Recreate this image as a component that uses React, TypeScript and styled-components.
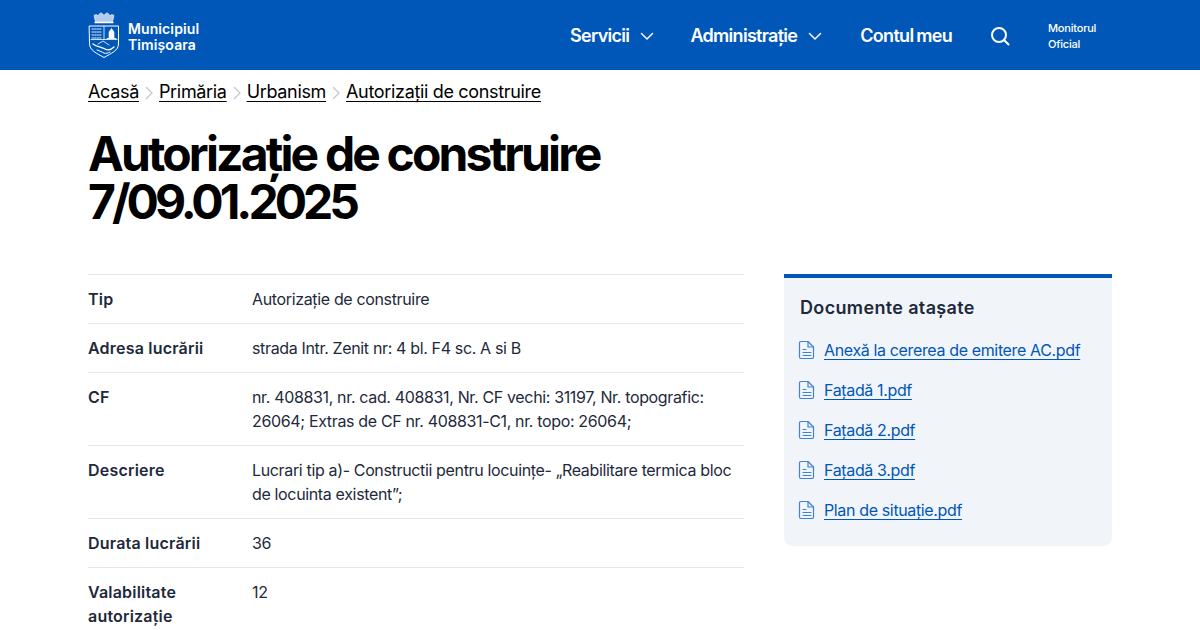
import React from "react";
import styled, { createGlobalStyle } from "styled-components";

const Global = createGlobalStyle`
  html, body { margin: 0; padding: 0; background: #fff; height: 630px; overflow: hidden; }
  body { font-family: Inter, "Liberation Sans", sans-serif; color: #1e293b; }
  * { box-sizing: border-box; }
`;

const Header = styled.header`
  height: 70px;
  background: #0057b8;
  color: #fff;
  display: flex;
  align-items: center;
  padding: 0 88px;
`;
const Brand = styled.a`
  display: flex;
  align-items: center;
  gap: 8px;
  color: #fff;
  font-size: 14px;
  line-height: 16px;
  font-weight: 600;
  letter-spacing: 0.1px;
`;
const BrandText = styled.span`
  margin-top: 3px;
`;
const Nav = styled.nav`
  margin-left: auto;
  display: flex;
  align-items: center;
  padding-top: 1px;
`;
const NavItem = styled.a<{ $gap: number }>`
  display: flex;
  align-items: center;
  gap: 11px;
  margin-right: ${(p) => p.$gap}px;
  font-size: 18px;
  line-height: 24px;
  font-weight: 600;
  letter-spacing: -0.7px;
  word-spacing: -1px;
  color: #fff;
`;
const SearchBtn = styled.span`
  display: flex;
  margin-right: 38px;
`;
const Monitor = styled.a`
  width: 64px;
  font-size: 11px;
  line-height: 16px;
  font-weight: 500;
  letter-spacing: -0.2px;
  color: #fff;
`;
const Main = styled.main`
  padding: 0 88px;
`;
const Crumbs = styled.div`
  display: flex;
  align-items: center;
  gap: 2px;
  height: 44px;
  font-size: 18px;
  line-height: 24px;
  letter-spacing: -0.33px;
  color: #000;
`;
const Crumb = styled.a`
  color: #000;
  text-decoration: underline;
  text-underline-offset: 3px;
  text-decoration-thickness: 1px;
  text-decoration-skip-ink: none;
`;
const Title = styled.h1`
  margin: 16px 0 48px;
  width: 656px;
  font-size: 48px;
  line-height: 48px;
  font-weight: 700;
  letter-spacing: -2.85px;
  color: #000;
`;
const TitleNumber = styled.span`
  letter-spacing: -4px;
`;
const Columns = styled.div`
  display: grid;
  grid-template-columns: 656px 328px;
  gap: 40px;
  align-items: start;
`;
const Row = styled.div`
  display: grid;
  grid-template-columns: 164px 1fr;
  border-top: 1px solid #e2e8f0;
  padding: 12px 0;
  font-size: 16px;
  line-height: 24px;
`;
const Label = styled.div`
  font-weight: 600;
  letter-spacing: 0.2px;
  color: #1e293b;
`;
const Value = styled.div`
  font-weight: 400;
  letter-spacing: -0.35px;
  color: #1e293b;
`;
const Side = styled.aside`
  background: #f1f5f9;
  border-top: 4px solid #0057b8;
  border-radius: 0 0 8px 8px;
  padding: 16px;
  height: 272px;
`;
const SideTitle = styled.h2`
  margin: 0 0 16px;
  font-size: 18px;
  line-height: 28px;
  font-weight: 600;
  letter-spacing: 0.35px;
  color: #1e293b;
`;
const DocList = styled.div`
  display: flex;
  flex-direction: column;
  gap: 16px;
`;
const Doc = styled.div`
  display: flex;
  align-items: center;
  gap: 8px;
  margin-left: -2px;
  font-size: 16px;
  line-height: 24px;
  letter-spacing: -0.36px;
`;
const DocLink = styled.a`
  color: #0057b8;
  text-decoration: underline;
  text-underline-offset: 3px;
  text-decoration-thickness: 1px;
  text-decoration-skip-ink: none;
`;

const Chevron = () => (
  <svg width="14" height="14" viewBox="0 0 14 14" fill="none" stroke="#fff" strokeWidth="1.5" strokeLinecap="round" strokeLinejoin="round">
    <path d="M1.500 4.500 7 10l5.500-5.500" />
  </svg>
);
const Sep = () => (
  <svg width="16" height="16" viewBox="0 0 16 16" fill="none" stroke="#c4c8ce" strokeWidth="1.4" strokeLinecap="round" strokeLinejoin="round" style={{ marginTop: 2 }}>
    <path d="M5.500 2.500 11 8l-5.500 5.500" />
  </svg>
);
const FileIcon = () => (
  <svg width="18" height="20" viewBox="0 0 18 20" fill="none" stroke="#3f83d1" strokeWidth="1.2" strokeLinecap="round" strokeLinejoin="round">
    <path d="M3 1.500h7l5.500 5.500v10a1.500 1.500 0 0 1-1.500 1.500H3A1.500 1.500 0 0 1 1.500 17V3A1.500 1.500 0 0 1 3 1.500Z" />
    <path d="M10 1.500V7h5.500M5 9.500h3M5 12.500h8M5 15.500h8" />
  </svg>
);
const Logo = () => (
  <svg width="32" height="48" viewBox="0 0 32 48" fill="none" stroke="#fff" strokeLinecap="round" strokeLinejoin="round">
    <path d="M7.500 11 6 4.500c2-1.500 3-1 4 .5 1-2 2-3 3-3s2 1 3 2.500C17 3 18 2 19 2s2 1 3 3c1-1.500 2-2 4-.5L24.500 11Z" fill="#dfe9f6" fillOpacity=".8" strokeWidth=".6" />
    <path d="M7 11.500h18" strokeWidth="1.300" />
    <path d="M1.500 15h29v18c0 6.500-7.500 9.500-14.500 13.500C9 42.500 1.500 39.500 1.500 33Z" strokeWidth="1" />
    <path d="M3 28.500h26" strokeWidth=".8" />
    <path d="M16 15v13.500" strokeWidth=".8" />
    <path d="M4 18h10M4 21h10M4 24h10M4 27h10" strokeWidth=".9" strokeDasharray="1.500 1" />
    <path d="M21 27v-6l2.500-3.500L26 21v6Z" fill="#fff" strokeWidth=".6" />
    <path d="M19 27.500h9" strokeWidth=".9" />
    <path d="M5 33c4 3 8 3 12 5s7 0 9-2" strokeWidth="1.300" />
    <path d="M9 39c3 1 5 2 7 3s4 0 6-1" strokeWidth="1" />
    <path d="M10 33l5-3 6 4" strokeWidth=".8" />
  </svg>
);

const rows: [string, React.ReactNode][] = [
  ["Tip", "Autorizație de construire"],
  ["Adresa lucrării", "strada Intr. Zenit nr: 4 bl. F4 sc. A si B"],
  ["CF", "nr. 408831, nr. cad. 408831, Nr. CF vechi: 31197, Nr. topografic: 26064; Extras de CF nr. 408831-C1, nr. topo: 26064;"],
  ["Descriere", "Lucrari tip a)- Constructii pentru locuințe- „Reabilitare termica bloc de locuinta existent”;"],
  ["Durata lucrării", "36"],
  ["Valabilitate autorizație", "12"],
];
const docs = ["Anexă la cererea de emitere AC.pdf", "Fațadă 1.pdf", "Fațadă 2.pdf", "Fațadă 3.pdf", "Plan de situație.pdf"];
const crumbs = ["Acasă", "Primăria", "Urbanism", "Autorizații de construire"];

export default function App() {
  return (
    <>
      <Global />
      <Header>
        <Brand>
          <Logo />
          <BrandText>Municipiul<br />Timișoara</BrandText>
        </Brand>
        <Nav>
          <NavItem $gap={36}>Servicii <Chevron /></NavItem>
          <NavItem $gap={38}>Administrație <Chevron /></NavItem>
          <NavItem $gap={38}>Contul meu</NavItem>
          <SearchBtn>
            <svg width="20" height="20" viewBox="0 0 20 20" fill="none" stroke="#fff" strokeWidth="2" strokeLinecap="round">
              <circle cx="9" cy="9" r="7" />
              <path d="m14 14 4.500 4.500" />
            </svg>
          </SearchBtn>
          <Monitor>Monitorul<br />Oficial</Monitor>
        </Nav>
      </Header>
      <Main>
        <Crumbs>
          {crumbs.map((c, i) => (
            <React.Fragment key={c}>
              {i > 0 && <Sep />}
              <Crumb>{c}</Crumb>
            </React.Fragment>
          ))}
        </Crumbs>
        <Title>Autorizație de construire <TitleNumber>7/09.01.2025</TitleNumber></Title>
        <Columns>
          <div>
            {rows.map(([l, v]) => (
              <Row key={l}>
                <Label>{l}</Label>
                <Value>{v}</Value>
              </Row>
            ))}
          </div>
          <Side>
            <SideTitle>Documente atașate</SideTitle>
            <DocList>
              {docs.map((d) => (
                <Doc key={d}>
                  <FileIcon />
                  <DocLink>{d}</DocLink>
                </Doc>
              ))}
            </DocList>
          </Side>
        </Columns>
      </Main>
    </>
  );
}
